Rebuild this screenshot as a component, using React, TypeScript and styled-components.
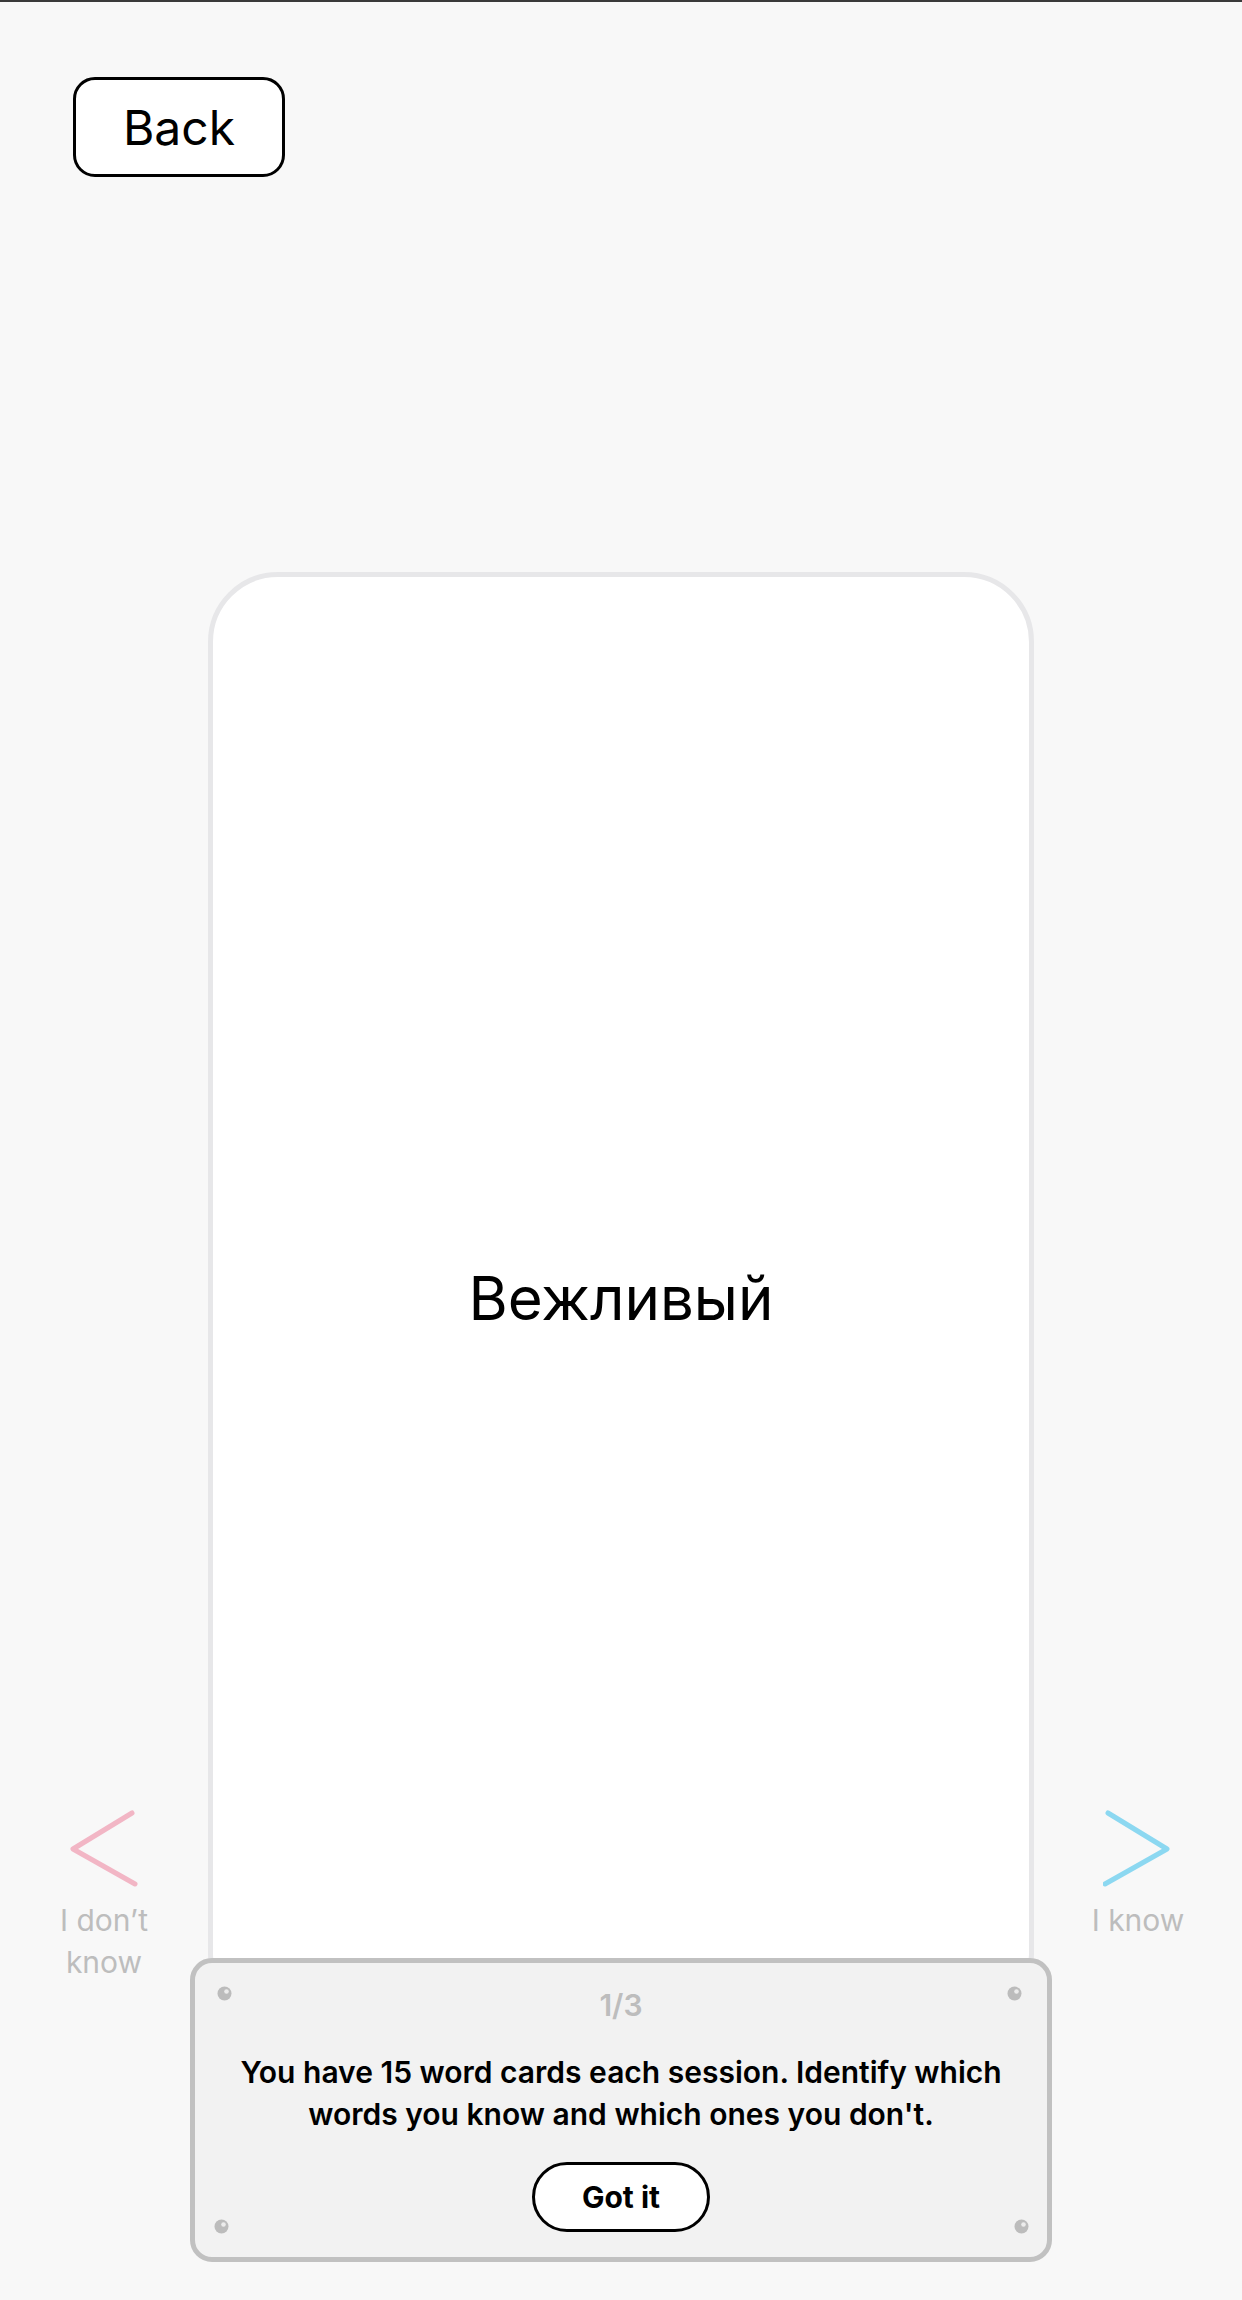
import React from "react";
import styled, { createGlobalStyle } from "styled-components";

const GlobalStyle = createGlobalStyle`
  html, body {
    margin: 0;
    padding: 0;
    background: #f8f8f8;
    font-family: Inter, "Noto Sans", sans-serif;
  }
`;

type Side = "left" | "right";

function Chevron({ side }: { side: Side }) {
  const pts = side === "left" ? "63,4 4,40 66,75" : "5,4 64,40 2,75";
  return (
    <svg width="70" height="80" viewBox="0 0 70 80">
      <polyline
        points={pts}
        fill="none"
        stroke={side === "left" ? "#f2b6c5" : "#8cd8f1"}
        strokeWidth="5"
        strokeLinecap="round"
        strokeLinejoin="round"
      />
    </svg>
  );
}

function Screw() {
  return (
    <svg width="15" height="15" viewBox="0 0 15 15">
      <circle cx="7.5" cy="7.5" r="7" fill="#bcbcbc" />
      <circle cx="9.5" cy="5.5" r="2.3" fill="#ececec" />
    </svg>
  );
}

export default function App() {
  return (
    <Page>
      <GlobalStyle />
      <Header>
        <BackButton>Back</BackButton>
      </Header>

      <Stage>
        <SideNav>
          <Chevron side="left" />
          <NavLabel>I don’t know</NavLabel>
        </SideNav>

        <Card>
          <Word>Вежливый</Word>
        </Card>

        <SideNav>
          <Chevron side="right" />
          <NavLabel>I know</NavLabel>
        </SideNav>

        <Hint>
          <Corner $v="top" $h="left" $x={22} $y={23}>
            <Screw />
          </Corner>
          <Corner $v="top" $h="right" $x={25} $y={23}>
            <Screw />
          </Corner>
          <Corner $v="bottom" $h="left" $x={19} $y={23}>
            <Screw />
          </Corner>
          <Corner $v="bottom" $h="right" $x={18} $y={23}>
            <Screw />
          </Corner>

          <Step>1/3</Step>
          <HintText>
            You have 15 word cards each session. Identify which words you know
            and which ones you don't.
          </HintText>
          <GotIt>Got it</GotIt>
        </Hint>
      </Stage>
    </Page>
  );
}

const Page = styled.div`
  width: 1242px;
  height: 2300px;
  border-top: 2px solid #3a3a3a;
  box-sizing: border-box;
  overflow: hidden;
`;

const Header = styled.div`
  padding: 75px 0 0 73px;
  height: 570px;
  box-sizing: border-box;
`;

const BackButton = styled.button`
  width: 212px;
  height: 100px;
  border: 3px solid #000;
  border-radius: 22px;
  background: #fff;
  color: #000;
  font-family: Inter, sans-serif;
  font-size: 48px;
  font-weight: 400;
  padding: 0;
`;

const Stage = styled.div`
  position: relative;
  display: grid;
  grid-template-columns: 208px 826px 208px;
  align-items: start;
`;

const SideNav = styled.div`
  padding-top: 1237px;
  display: flex;
  flex-direction: column;
  align-items: center;
  gap: 10px;
`;

const NavLabel = styled.div`
  width: 130px;
  text-align: center;
  color: #bdbdbd;
  font-size: 30px;
  line-height: 42px;
`;

const Card = styled.div`
  height: 1452px;
  background: #fff;
  border: 5px solid #e7e7e9;
  border-radius: 70px;
  box-sizing: border-box;
  display: flex;
  align-items: center;
  justify-content: center;
`;

const Word = styled.div`
  font-size: 60px;
  color: #000;
  line-height: 1;
`;

const Hint = styled.div`
  position: absolute;
  left: 190px;
  top: 1386px;
  width: 862px;
  height: 304px;
  box-sizing: border-box;
  background: #f2f2f2;
  border: 5px solid #c1c1c1;
  border-radius: 22px;
  display: flex;
  flex-direction: column;
  align-items: center;
  padding-top: 24px;
`;

const Corner = styled.div<{
  $v: "top" | "bottom";
  $h: "left" | "right";
  $x: number;
  $y: number;
}>`
  position: absolute;
  ${(p) => p.$v}: ${(p) => p.$y}px;
  ${(p) => p.$h}: ${(p) => p.$x}px;
  line-height: 0;
`;

const Step = styled.div`
  color: #bdbdbd;
  font-size: 30px;
  font-weight: 600;
  line-height: 36px;
`;

const HintText = styled.p`
  margin: 28px 0 0;
  width: 790px;
  text-align: center;
  color: #000;
  font-size: 30px;
  font-weight: 600;
  line-height: 42px;
`;

const GotIt = styled.button`
  margin-top: 27px;
  width: 178px;
  height: 70px;
  border: 3px solid #000;
  border-radius: 35px;
  background: #fff;
  color: #000;
  font-family: Inter, sans-serif;
  font-size: 30px;
  font-weight: 700;
  padding: 0;
`;
